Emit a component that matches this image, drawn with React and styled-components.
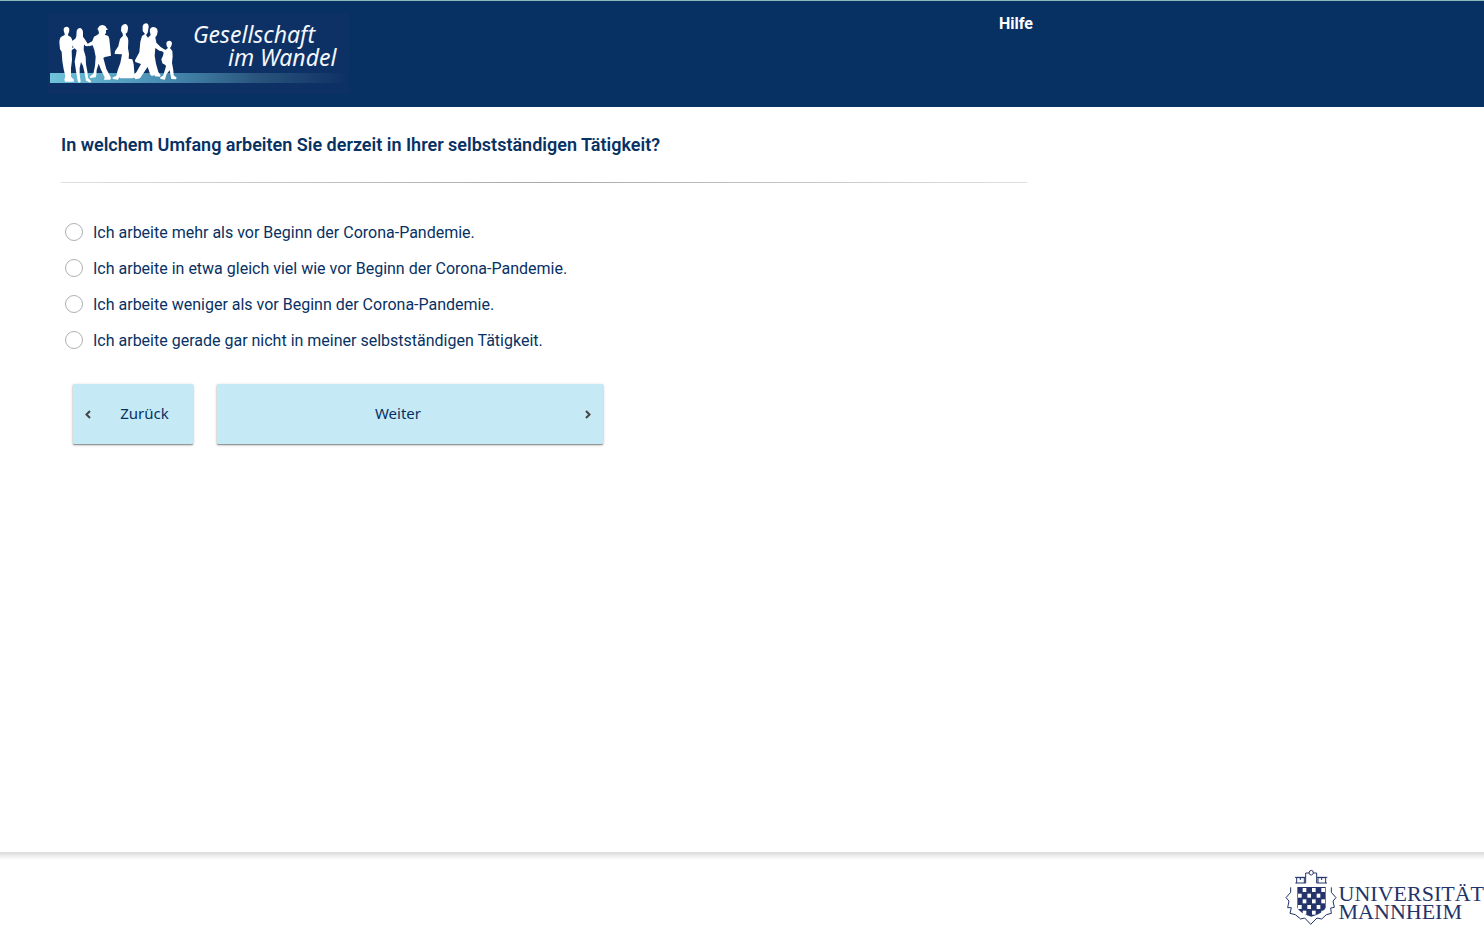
import React from "react";
import styled, { createGlobalStyle } from "styled-components";

const GlobalStyle = createGlobalStyle`
  * { box-sizing: border-box; }
  body {
    margin: 0;
    background: #fff;
    color: #083163;
    font-family: Roboto, "Liberation Sans", sans-serif;
    font-size: 16px;
  }
`;

const Page = styled.div`
  min-height: 100vh;
  display: flex;
  flex-direction: column;
`;

const Header = styled.header`
  background: #083163;
  border-top: 1px solid #8db8bb;
  padding-bottom: 12px;
`;

const HeaderInner = styled.div`
  max-width: 1033px;
  padding: 12px 0 0 48px;
  display: flex;
  justify-content: space-between;
  align-items: flex-start;
`;

const HomeLink = styled.a`
  display: flex;
`;

const HelpLink = styled.a`
  color: #fff;
  font-weight: 700;
  line-height: 22px;
  text-decoration: none;
`;

const Main = styled.main`
  flex: 1;
  max-width: 1027px;
  padding: 24px 0 24px 61px;
`;

const Question = styled.h1`
  margin: 0;
  padding-bottom: 24px;
  font-size: 18px;
  line-height: 27px;
  font-weight: 600;
`;

const Divider = styled.hr`
  height: 1px;
  margin: 0 0 31px;
  border: 0;
  background: linear-gradient(to right, #e0e0e0, #a8a8a8 50%, #e0e0e0);
`;

const Options = styled.fieldset`
  margin: 0;
  padding: 0 0 0 4px;
  border: 0;
`;

const Option = styled.label`
  display: flex;
  align-items: center;
  gap: 10px;
  height: 36px;
  line-height: 22px;
`;

const OptionText = styled.span`
  padding-top: 2px;
`;

const Radio = styled.input`
  appearance: none;
  width: 18px;
  height: 18px;
  margin: 0;
  border: 1px solid #b0b0b0;
  border-radius: 50%;
  background: #fff;
  &:checked { background: #083163; box-shadow: inset 0 0 0 4px #fff; }
`;

const Actions = styled.div`
  display: flex;
  gap: 24px;
  padding: 26px 12px 0;
`;

const NavButton = styled.button`
  width: ${(p) => (p.$wide ? 386 : 120)}px;
  height: 60px;
  padding: 0 12px;
  display: flex;
  align-items: center;
  border: 0;
  border-radius: 1px;
  background: #c5e9f5;
  color: #083163;
  font-family: "Noto Sans", sans-serif;
  font-size: 15px;
  box-shadow: 0 1px 3px rgba(0, 0, 0, 0.3), 0 1px 1px rgba(0, 0, 0, 0.3);
`;

const ButtonText = styled.span`
  flex: 1;
  padding: ${(p) => (p.$after ? "0 0 2px 17px" : "0 18px 2px 0")};
  text-align: center;
`;

const Footer = styled.footer`
  min-height: 76px;
  border-top: 2px solid #dedede;
  background: linear-gradient(to bottom, #e4e4e4, #fff 6px);
  padding-top: 15px;
  display: flex;
  justify-content: flex-end;
`;

const University = styled.a`
  display: flex;
  gap: 2px;
  color: #24346a;
  text-decoration: none;
`;

const UniversityName = styled.span`
  padding-top: 16px;
  font-family: "Liberation Serif", serif;
  font-size: 22px;
  line-height: 18px;
`;

function PanelLogo() {
  return (
    <svg width="302" height="82" viewBox="48 13 302 82" role="img" aria-label="Gesellschaft im Wandel">
      <defs>
        <linearGradient id="band">
          <stop offset="0" stopColor="#6fc3da" />
          <stop offset="0.4" stopColor="#468ab0" />
          <stop offset="0.7" stopColor="#29547c" />
          <stop offset="1" stopColor="#0e3165" />
        </linearGradient>
      </defs>
      <rect x="48" y="13" width="301" height="81" fill="#0d3165" />
      <rect x="50" y="73" width="297" height="10" fill="url(#band)" />
      <g transform="translate(40 0) scale(.33333)" fill="#fff">
        <path d="M71 86Q73 80 80 80Q88 81 88 89Q88 98 84 103L85 107Q94 109 96 118L98 137L95 153L96 180L93 204L93 230L102 239L101 245H75L73 239L76 229L71 208L67 184L65 155L60 148L58 126Q59 110 68 108L74 105L74 101Q70 94 71 86Z" />
        <path d="M110 92Q113 83 121 84Q129 87 129 98L129 110L136 120L143 131L154 125L158 129L144 139L136 138L132 133L131 149L137 170L138 193L142 214L144 233L153 243L151 248L138 242L134 220L129 198L123 186L119 204L119 223L122 245L117 249L113 243L108 213L104 185L108 164L110 151L104 145L94 151L90 147L101 142L94 132L91 126L106 116L109 109Z" />
        <path d="M175 83Q178 75 188 75Q198 77 199 84L203 87L202 90L198 90L198 99L194 104L205 108L208 117L213 167L195 171L190 174L199 207L213 233L211 239L192 239L194 232L183 209L176 191L170 210L169 225L167 232L151 234L149 230L160 221L165 197L167 170L163 150L158 136L147 139L145 134L157 123L162 110L175 103L177 99L175 91L172 87Z" />
        <path d="M244 80Q248 71 257 72Q265 76 264 86L262 97L257 101L258 106Q264 112 265 122L264 145L267 162L266 176L277 178L281 193L284 231L278 235H241L238 232L234 239L219 237L217 233L229 227L233 211L241 189L246 163L224 162L225 154L235 139L240 117L249 107L248 101L243 92Z" />
        <path d="M308 78Q310 70 318 70Q326 71 326 81L323 98L318 105L324 113L332 105L329 93Q330 81 341 81Q352 82 353 94Q353 105 346 112L349 128L362 141L375 149L373 155L358 152L346 144L344 167L348 191L355 216L362 226L360 230L344 229L344 225L336 228L331 224L323 201L311 218L300 235L287 238L278 228L289 217L303 192L286 186L285 181L298 157L301 125L306 108L315 102L308 93Z" />
        <path d="M379 130Q380 122 388 122Q396 123 396 131L393 140L390 144L397 153L398 169L396 188L400 211L401 226L410 233L408 238L394 237L389 211L380 222L376 234L375 239L362 237L360 233L370 226L378 199L376 195L367 190L364 178L369 167L371 158L364 151L367 147L376 150L384 144L380 138Z" />
      </g>
      <g fill="#f4f7fb" fontFamily='"Noto Sans", sans-serif' fontStyle="italic" fontSize="23">
        <text x="193" y="43">Gesellschaft</text>
        <text x="228" y="66">im Wandel</text>
      </g>
    </svg>
  );
}

function Crest() {
  const cells = [];
  for (let r = 0; r < 5; r++)
    for (let c = 0; c < 6; c++)
      if ((r + c) % 2 === 1) cells.push(<rect key={`${r}-${c}`} x={c * 14 + 84} y={r * 17 + 129} width="11" height="12" />);
  return (
    <svg width="52" height="56" viewBox="45 72 156 168" aria-hidden="true">
      <path d="M82 126H167V188Q160 204 124 215Q88 204 82 188Z" fill="#24346a" />
      <g fill="#fff">{cells}</g>
      <g fill="none" stroke="#24346a" strokeWidth="3">
        <path d="M76 114H107M140 114H171M80 114V98H103V114M144 114V98H167V114M75 97H107M140 97H172M91 97V105M155 97V105M107 114V84H117M130 84H140V114M117 84Q118 76 124 76Q130 76 130 84Q128 90 124 90Q118 90 117 84" />
        <path d="M62 127V142L48 158L57 168L53 188L64 188L60 205L76 209L92 222L104 219L122 238L141 219L155 222L169 209L184 205L182 189L193 187L189 168L198 158L184 142V127" />
      </g>
    </svg>
  );
}

function Chevron({ right }) {
  return (
    <svg width="6" height="10" viewBox="0 0 6 10" fill="none" stroke="#444" strokeWidth="2" aria-hidden="true">
      <path d={right ? "M1 2L4.5 5.5L1 9" : "M5 2L1.5 5.5L5 9"} />
    </svg>
  );
}

const answers = [
  "Ich arbeite mehr als vor Beginn der Corona-Pandemie.",
  "Ich arbeite in etwa gleich viel wie vor Beginn der Corona-Pandemie.",
  "Ich arbeite weniger als vor Beginn der Corona-Pandemie.",
  "Ich arbeite gerade gar nicht in meiner selbstständigen Tätigkeit.",
];

export default function App() {
  return (
    <Page>
      <GlobalStyle />
      <Header>
        <HeaderInner>
          <HomeLink href="#start"><PanelLogo /></HomeLink>
          <HelpLink href="#hilfe">Hilfe</HelpLink>
        </HeaderInner>
      </Header>
      <Main>
        <Question id="question">In welchem Umfang arbeiten Sie derzeit in Ihrer selbstständigen Tätigkeit?</Question>
        <Divider />
        <Options aria-labelledby="question">
          {answers.map((answer, i) => (
            <Option key={answer} htmlFor={`answer-${i}`}>
              <Radio type="radio" name="umfang" id={`answer-${i}`} value={i} />
              <OptionText>{answer}</OptionText>
            </Option>
          ))}
        </Options>
        <Actions>
          <NavButton type="button">
            <Chevron />
            <ButtonText $after>Zurück</ButtonText>
          </NavButton>
          <NavButton type="button" $wide>
            <ButtonText>Weiter</ButtonText>
            <Chevron right />
          </NavButton>
        </Actions>
      </Main>
      <Footer>
        <University href="#universitaet">
          <Crest />
          <UniversityName>UNIVERSITÄT<br />MANNHEIM</UniversityName>
        </University>
      </Footer>
    </Page>
  );
}
